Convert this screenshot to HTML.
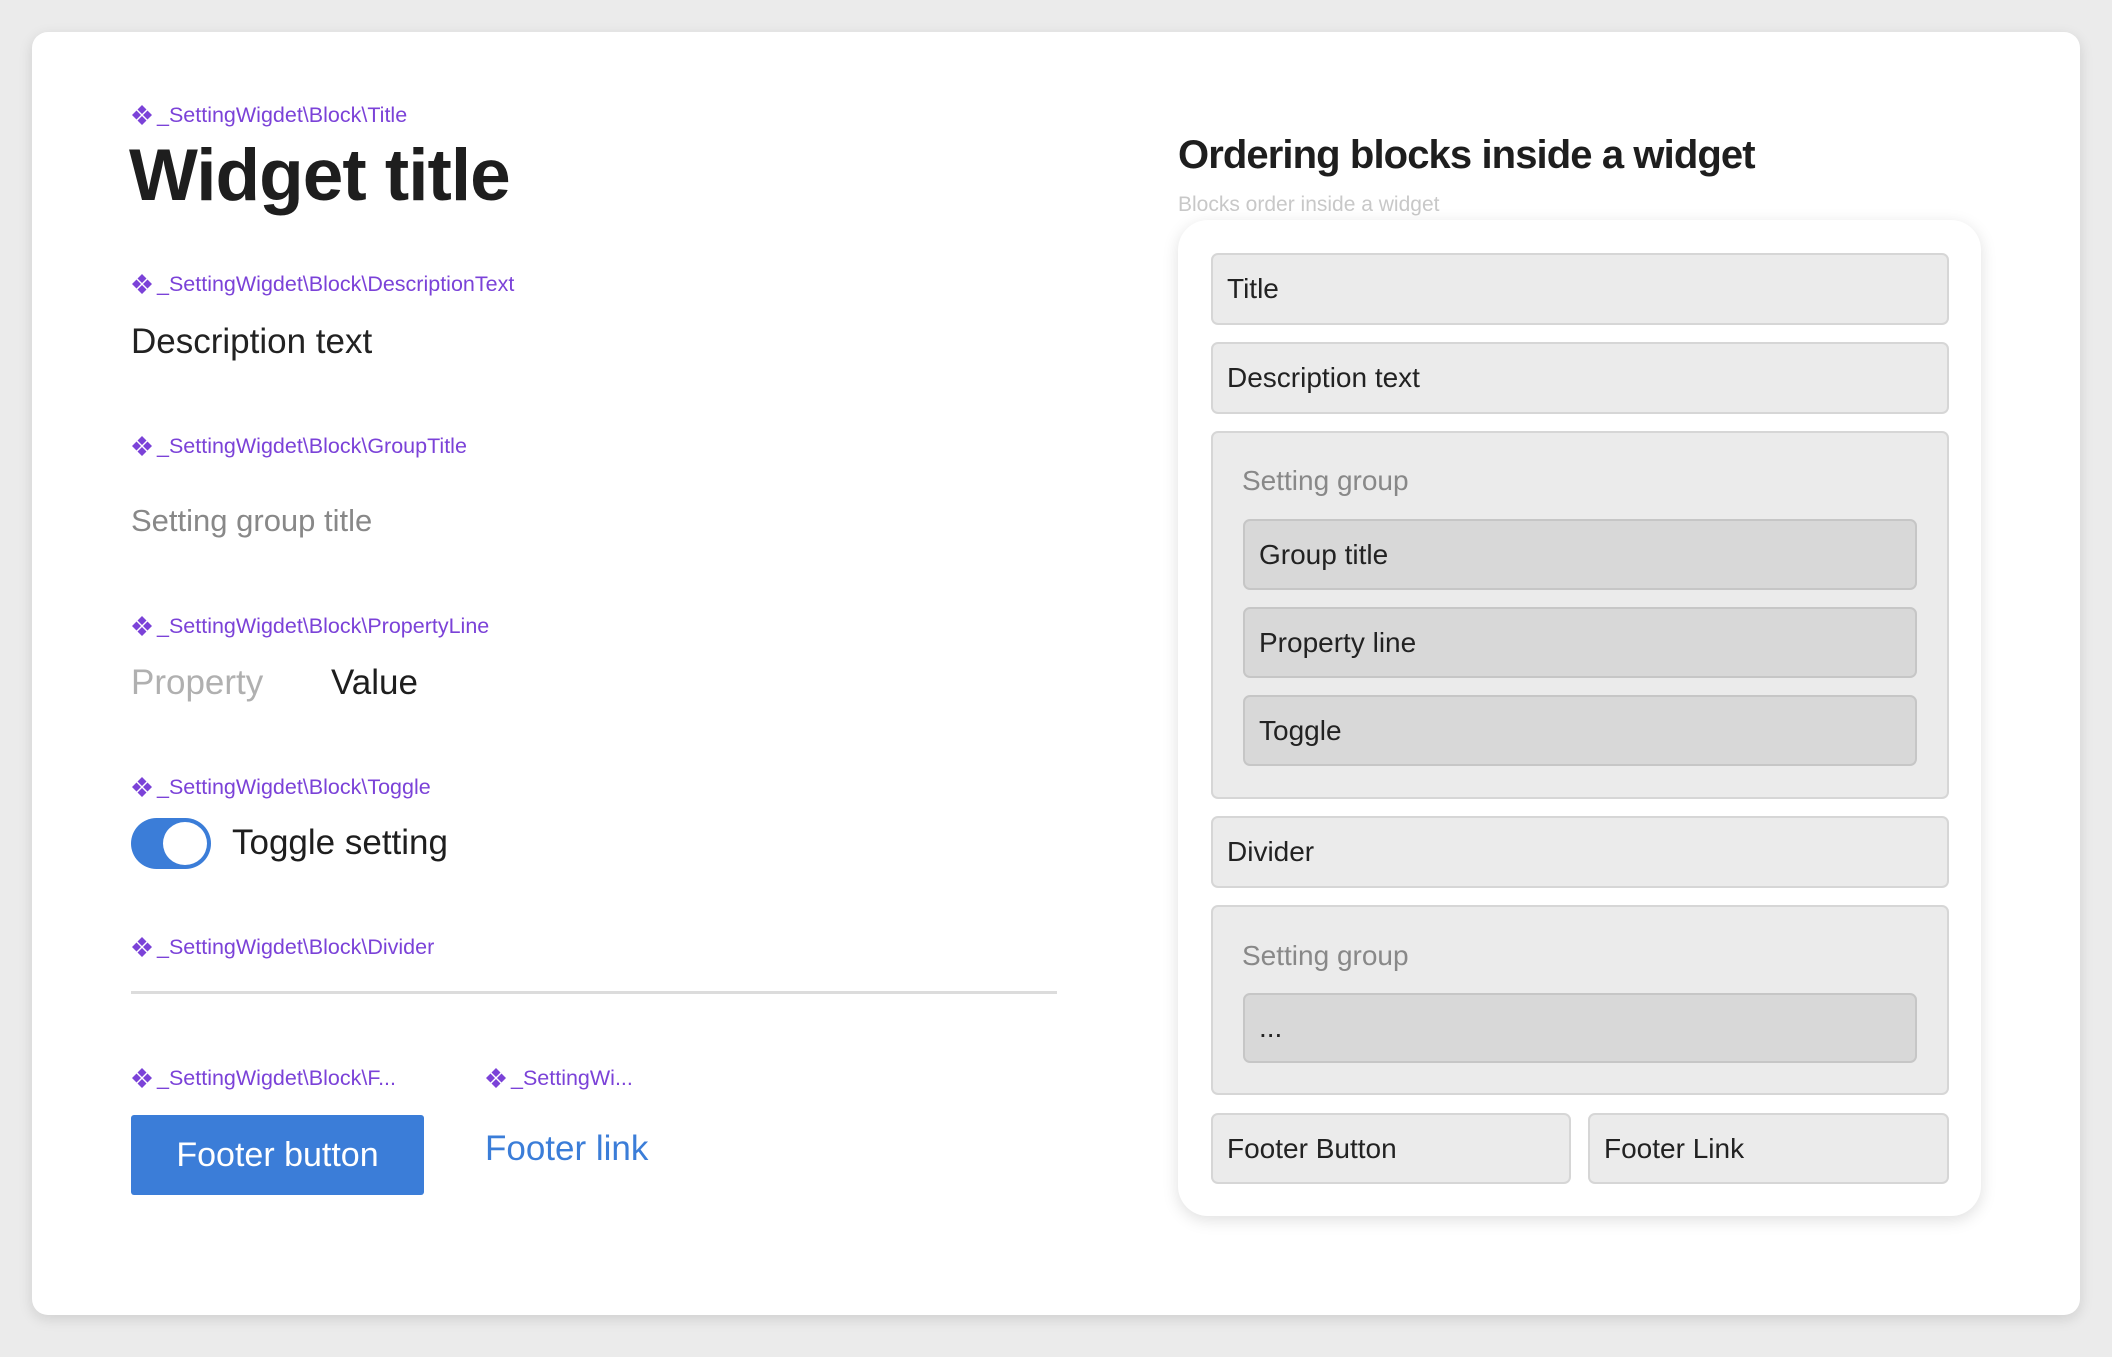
<!DOCTYPE html>
<html><head><meta charset="utf-8"><style>
*{margin:0;padding:0;box-sizing:border-box}
body{width:2112px;height:1357px;background:#ebebeb;font-family:"Liberation Sans",sans-serif;position:relative;overflow:hidden;color:#222}
.card{position:absolute;left:32px;top:32px;width:2048px;height:1283px;background:#fff;border-radius:16px;box-shadow:0 4px 14px rgba(0,0,0,.12)}
.a{position:absolute;white-space:nowrap}
.lbl{position:absolute;color:#7b42d8;font-size:21.5px;line-height:24px;white-space:nowrap;display:flex;align-items:center}
.lbl svg{margin-right:4px}
.panel{position:absolute;left:1178px;top:220px;width:803px;height:996px;background:#fff;border-radius:30px;box-shadow:0 4px 16px rgba(0,0,0,.13)}
.it{position:absolute;background:#ebebeb;border:2px solid #d6d6d6;border-radius:7px;font-size:28px;color:#222;display:flex;align-items:center;padding-left:14px}
.in{background:#d8d8d8;border-color:#c6c6c6}
.g{position:absolute;font-size:28px;color:#888}
</style></head><body>
<div class="card"></div>
<svg width="0" height="0" style="position:absolute"><defs><g id="ic"><path d="M11 1l4.5 4.5-4.5 4.5-4.5-4.5zM5.5 6.5l4.5 4.5-4.5 4.5-4.5-4.5zM16.5 6.5l4.5 4.5-4.5 4.5-4.5-4.5zM11 12l4.5 4.5-4.5 4.5-4.5-4.5z" fill="#7b42d8"/></g></defs></svg>

<div class="lbl" style="left:131px;top:103px"><svg width="22" height="22"><use href="#ic"/></svg>_SettingWigdet\Block\Title</div>
<div class="a" style="left:129px;top:134px;font-size:73px;font-weight:bold;letter-spacing:-1px;line-height:84px;color:#1e1e1e">Widget title</div>

<div class="lbl" style="left:131px;top:272px"><svg width="22" height="22"><use href="#ic"/></svg>_SettingWigdet\Block\DescriptionText</div>
<div class="a" style="left:131px;top:322px;font-size:35px;line-height:40px">Description text</div>

<div class="lbl" style="left:131px;top:434px"><svg width="22" height="22"><use href="#ic"/></svg>_SettingWigdet\Block\GroupTitle</div>
<div class="a" style="left:131px;top:501px;font-size:31px;line-height:40px;color:#888">Setting group title</div>

<div class="lbl" style="left:131px;top:614px"><svg width="22" height="22"><use href="#ic"/></svg>_SettingWigdet\Block\PropertyLine</div>
<div class="a" style="left:131px;top:663px;font-size:35px;line-height:40px;color:#b0b0b0">Property</div>
<div class="a" style="left:331px;top:663px;font-size:35px;line-height:40px;color:#1e1e1e">Value</div>

<div class="lbl" style="left:131px;top:775px"><svg width="22" height="22"><use href="#ic"/></svg>_SettingWigdet\Block\Toggle</div>
<div class="a" style="left:131px;top:818px;width:80px;height:51px;border-radius:26px;background:#3b7dd8"></div>
<div class="a" style="left:161px;top:820px;width:48px;height:47px;border-radius:50%;background:#fff;border:2px solid #3b7dd8"></div>
<div class="a" style="left:232px;top:823px;font-size:35px;line-height:40px;color:#1e1e1e">Toggle setting</div>

<div class="lbl" style="left:131px;top:935px"><svg width="22" height="22"><use href="#ic"/></svg>_SettingWigdet\Block\Divider</div>
<div class="a" style="left:131px;top:991px;width:926px;height:3px;background:#dcdcdc"></div>

<div class="lbl" style="left:131px;top:1066px"><svg width="22" height="22"><use href="#ic"/></svg>_SettingWigdet\Block\F...</div>
<div class="lbl" style="left:485px;top:1066px"><svg width="22" height="22"><use href="#ic"/></svg>_SettingWi...</div>
<div class="a" style="left:131px;top:1115px;width:293px;height:80px;background:#3b7dd8;border-radius:3px;color:#fff;font-size:34px;display:flex;align-items:center;justify-content:center">Footer button</div>
<div class="a" style="left:485px;top:1129px;font-size:35px;line-height:40px;color:#3b7dd8">Footer link</div>

<div class="a" style="left:1178px;top:132px;font-size:40px;font-weight:bold;letter-spacing:-0.9px;line-height:46px;color:#1e1e1e">Ordering blocks inside a widget</div>
<div class="a" style="left:1178px;top:193px;font-size:21px;line-height:24px;color:#c8c8c8">Blocks order inside a widget</div>
<div class="panel"></div>
<div class="it" style="left:1211px;top:253px;width:738px;height:72px">Title</div>
<div class="it" style="left:1211px;top:342px;width:738px;height:72px">Description text</div>
<div class="it" style="left:1211px;top:431px;width:738px;height:368px"></div>
<div class="g" style="left:1242px;top:465px">Setting group</div>
<div class="it in" style="left:1243px;top:519px;width:674px;height:71px">Group title</div>
<div class="it in" style="left:1243px;top:607px;width:674px;height:71px">Property line</div>
<div class="it in" style="left:1243px;top:695px;width:674px;height:71px">Toggle</div>
<div class="it" style="left:1211px;top:816px;width:738px;height:72px">Divider</div>
<div class="it" style="left:1211px;top:905px;width:738px;height:190px"></div>
<div class="g" style="left:1242px;top:940px">Setting group</div>
<div class="it in" style="left:1243px;top:993px;width:674px;height:70px">...</div>
<div class="it" style="left:1211px;top:1113px;width:360px;height:71px">Footer Button</div>
<div class="it" style="left:1588px;top:1113px;width:361px;height:71px">Footer Link</div>
</body></html>
